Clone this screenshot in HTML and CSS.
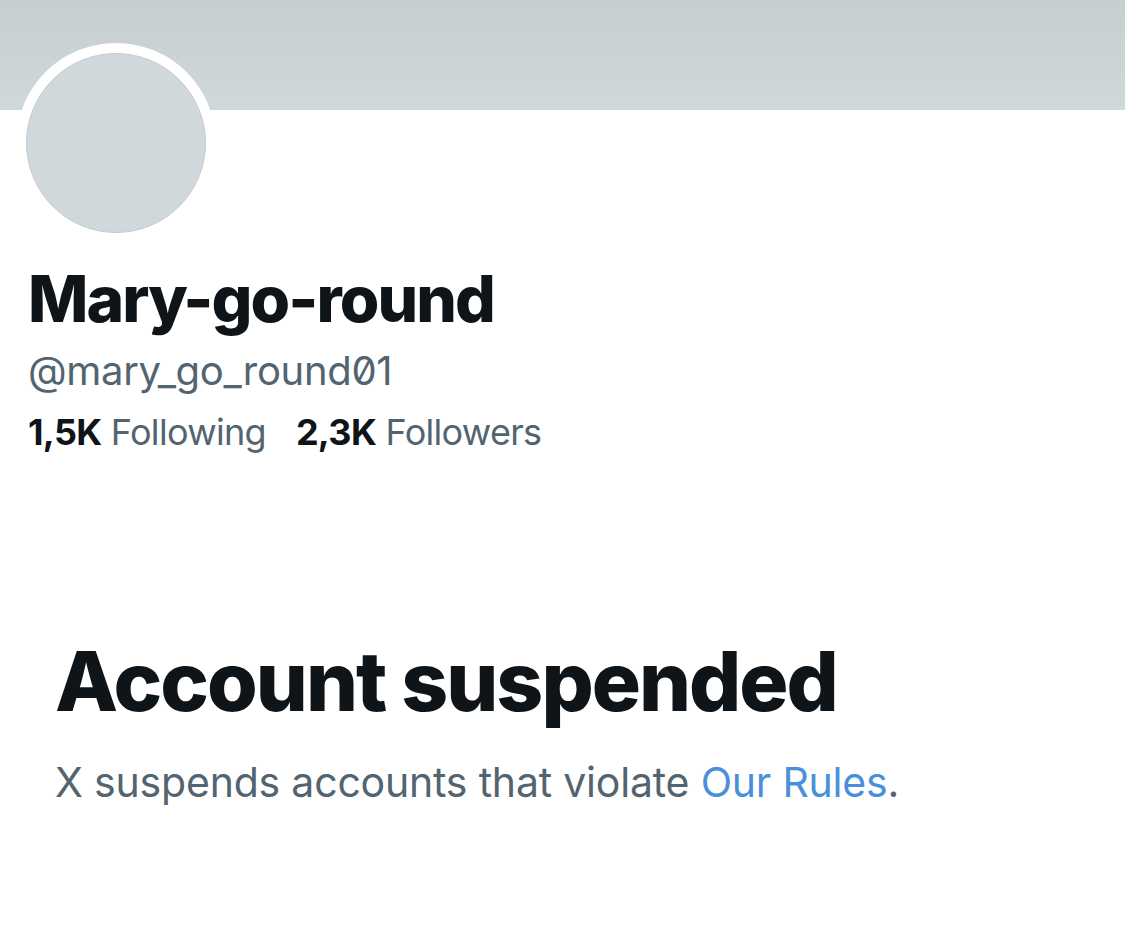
FILE: index.html
```html
<!DOCTYPE html>
<html>
<head>
<meta charset="utf-8">
<link rel="stylesheet" href="styles.css">
</head>
<body>
<div class="page">
  <div class="banner"></div>
  <div class="avatar-ring"><div class="avatar"></div></div>
  <div class="profile">
    <h1 class="name">Mary-go-round</h1>
    <div class="handle">@mary_go_round01</div>
    <div class="stats">
      <span class="stat"><b>1,5K</b> Following</span>
      <span class="stat"><b>2,3K</b> Followers</span>
    </div>
  </div>
  <div class="suspended">
    <h2 class="title">Account suspended</h2>
    <p class="desc">X suspends accounts that violate <a href="#" class="link">Our Rules</a>.</p>
  </div>
</div>
</body>
</html>
```
FILE: styles.css
```css
html, body {
  margin: 0;
  padding: 0;
  background: #ffffff;
}
.page {
  width: 1125px;
  height: 934px;
  overflow: hidden;
  font-family: Inter, "Liberation Sans", sans-serif;
  color: #0f1419;
  font-feature-settings: "zero" 1;
}
.banner {
  height: 110px;
  background: linear-gradient(#c6ced2, #d0d8dc);
}
.avatar-ring {
  width: 200px;
  height: 200px;
  margin: -67px 0 0 16px;
  border-radius: 50%;
  background: #ffffff;
  padding: 10px;
  box-sizing: border-box;
  display: flex;
  align-items: center;
  justify-content: center;
}
.avatar {
  width: 180px;
  height: 180px;
  border-radius: 50%;
  background: #d0d8dc;
  border: 1px solid #c4ccd0;
  box-sizing: border-box;
}
.profile {
  padding-left: 28px;
}
.name {
  margin: 16px 0 0;
  font-size: 64px;
  font-weight: 800;
  line-height: 80px;
  letter-spacing: -1.9px;
}
.handle {
  margin-top: 2px;
  font-size: 40px;
  line-height: 60px;
  color: #536471;
  letter-spacing: -0.3px;
}
.stats {
  display: flex;
  gap: 30px;
  margin-top: 3px;
  font-size: 36px;
  line-height: 56px;
  color: #536471;
  letter-spacing: -0.7px;
}
.stat b {
  color: #0f1419;
  font-weight: 700;
}
.suspended {
  padding: 172px 0 0 55px;
}
.title {
  margin: 0;
  font-size: 82px;
  font-weight: 800;
  line-height: 100px;
  letter-spacing: -2px;
}
.desc {
  margin: 20px 0 0;
  font-size: 41px;
  line-height: 60px;
  color: #536471;
  letter-spacing: -0.2px;
}
.link {
  color: #4a90d9;
  text-decoration: none;
}
```
